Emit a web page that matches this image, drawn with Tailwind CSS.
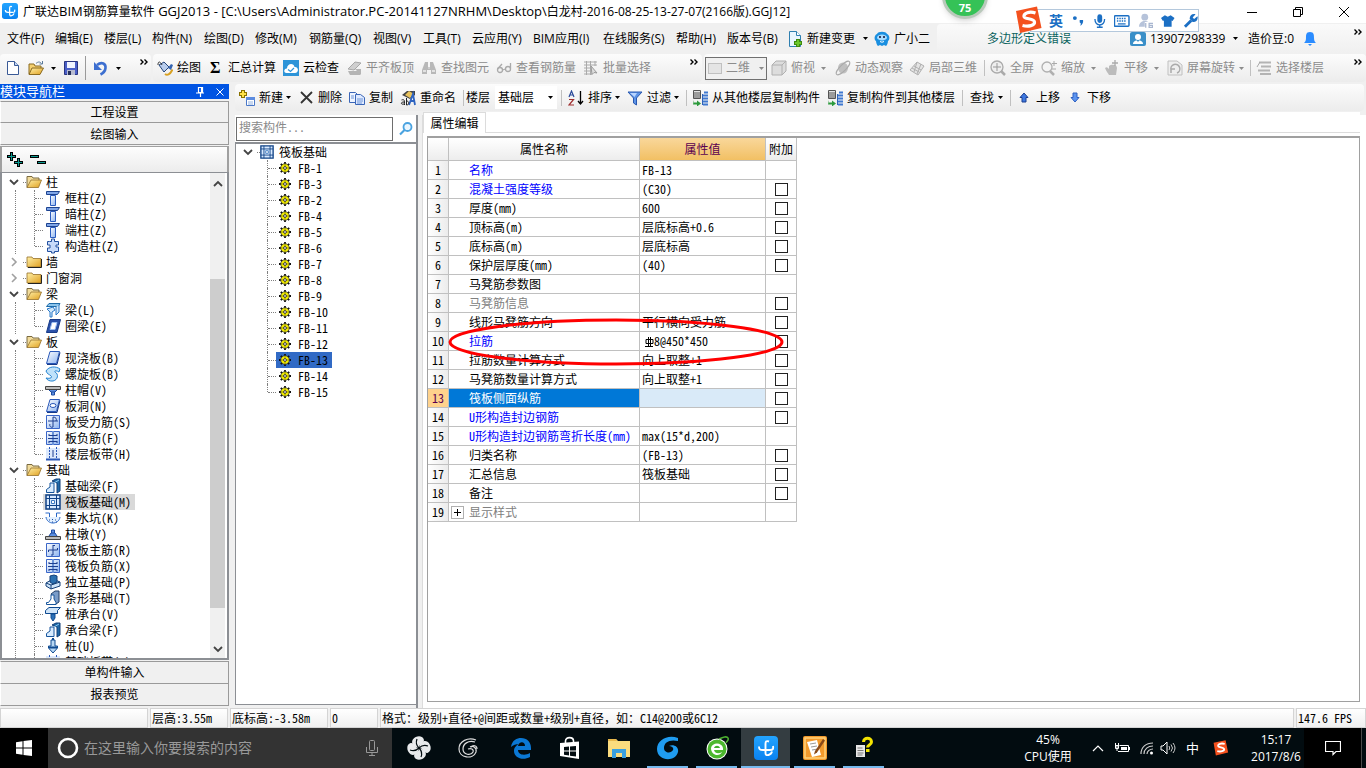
<!DOCTYPE html>
<html lang="zh-CN">
<head>
<meta charset="utf-8">
<title>广联达BIM钢筋算量软件 GGJ2013</title>
<script src="https://cdn.jsdelivr.net/npm/@tailwindcss/browser@4"></script>
</head>
<body class="flex h-screen flex-col overflow-hidden bg-[#f0f0f0] font-['Open_Sans','Noto_Sans_CJK_SC',sans-serif] text-xs text-black">

<svg class="absolute size-0" aria-hidden="true">
  <defs>
    <linearGradient id="gBlue" x1="0" y1="0" x2="1" y2="1"><stop offset="0" stop-color="#fff"/><stop offset="1" stop-color="#8db4f0"/></linearGradient>
    <linearGradient id="gFold" x1="0" y1="0" x2="1" y2="1"><stop offset="0" stop-color="#fff0a8"/><stop offset="1" stop-color="#e0a020"/></linearGradient>
    <linearGradient id="gSky" x1="0" y1="0" x2="0" y2="1"><stop offset="0" stop-color="#23a4ff"/><stop offset="1" stop-color="#0a82f0"/></linearGradient>
  </defs>
  <symbol id="caret" viewBox="0 0 5 3"><path d="M0 0h5L2.500 3z" fill="currentColor"/></symbol>
  <symbol id="more" viewBox="0 0 8 6"><path d="M.5.5 3 3 .5 5.500M4.500.5 7 3 4.500 5.500" fill="none" stroke="currentColor" stroke-width="1.400"/></symbol>
  <symbol id="app" viewBox="0 0 24 24"><rect width="24" height="24" rx="4" fill="url(#gSky)"/><path d="M15 5.500c-3-1-3.500 0-3.500 2.500v9c0 2 1 2.500 3 2 2-.5 3-1.500 3.500-3.500M5 10.500c0 3.500 1.500 3.500 4 3.500h7c3 0 3.500-1 3-4" fill="none" stroke="#fff" stroke-width="1.900"/></symbol>
  <symbol id="page" viewBox="0 0 16 16"><path d="M2.500 1.500h7l4 4v9h-11z" fill="#fff" stroke="#3a5a96"/><path d="M9.500 1.500v4h4" fill="#c4d6f4" stroke="#3a5a96"/></symbol>
  <symbol id="open" viewBox="0 0 16 16"><path d="M1 14V4h5l1 2h6v3" fill="#f4d070" stroke="#8a6a20"/><path d="M1 14.500 4 8h11.500L12 14.500z" fill="url(#gFold)" stroke="#8a6a20"/><path d="M8 3.500c2-2 4-2 5.500 0M14.500 1v3h-3" fill="none" stroke="#5a7a9a"/></symbol>
  <symbol id="save" viewBox="0 0 16 16"><path d="M1.500 1.500h13v13h-13z" fill="#4a5fc8" stroke="#2a3580"/><path d="M4 2h8v6H4z" fill="#f0f4ff"/><path d="M4 10h8v5H4z" fill="#b8bcd0"/><path d="M5 11h3v4H5z" fill="#26305a"/></symbol>
  <symbol id="undo" viewBox="0 0 16 16"><path d="M4 5c5-4 9-1 8.500 3-.3 3-2 5-5 6.500" fill="none" stroke="#3d6fd0" stroke-width="2.600"/><path d="M1 2v8h8z" fill="#3d6fd0"/></symbol>
  <symbol id="draw" viewBox="0 0 16 16"><path d="m2 5 5-3 5 5-5 5z" fill="#b8ccec" stroke="#25457a"/><path d="M5 5c-2-4-4-4-4 0" fill="none" stroke="#333"/><path d="M8 14c2 1.500 5 1 7.500-4.500" fill="none" stroke="#d8a020" stroke-width="2"/><path d="m11 8 3-4 2 1-2 5z" fill="#3664b0"/></symbol>
  <symbol id="cloud" viewBox="0 0 16 16"><rect width="16" height="16" fill="#2d94d8"/><path d="M3.500 13C0 13 1 8 4 8.500 4 3 11 2.500 11.500 7 16 6.500 16 13 12 13z" fill="#fff"/><path d="m5 9.500 2.500 2L11 8" fill="none" stroke="#2d94d8" stroke-width="1.300"/></symbol>
  <symbol id="align" viewBox="0 0 16 16"><path d="m2 9 7-7 6 1-7 7z" fill="#d0d0d0" stroke="#a8a8a8"/><path d="M2 11h12v4H4zM9 9h6v6" fill="#b4b4b4"/></symbol>
  <symbol id="binoc" viewBox="0 0 16 16"><path d="M4 2h3v5h2V2h3l3 8v4h-5v-4H6v4H1v-4z" fill="#b8b8b8"/><path d="M2 11h3M11 11h3M7.500 8h1" stroke="#eee" stroke-width="1.500"/></symbol>
  <symbol id="glass" viewBox="0 0 16 16"><g fill="none" stroke="#aaa" stroke-width="1.300"><circle cx="4" cy="10" r="2.500"/><circle cx="12" cy="9" r="2.500"/><path d="M6.500 10 9.500 9M1.500 9 6 4M14.500 8.500V3"/></g></symbol>
  <symbol id="batch" viewBox="0 0 16 16"><path d="M1 2h13M1 5h13M1 8h8M1 11h8M1 14h8M3.500 1v14M7.500 1v14M12 1v5" stroke="#aaa"/><path d="m8 6 6 7-3-.5-2 2z" fill="#ddd" stroke="#999"/></symbol>
  <symbol id="cube" viewBox="0 0 16 16"><path d="m1 5 4-4h10v10l-4 4H1z" fill="#ddd" stroke="#b0b0b0"/><path d="M1 5h10v10M11 5l4-4" fill="none" stroke="#b0b0b0"/></symbol>
  <symbol id="orbit" viewBox="0 0 16 16"><ellipse cx="8" cy="8" rx="5" ry="5.500" fill="#c0c0c0"/><ellipse cx="8" cy="8" rx="9" ry="3" transform="rotate(-45 8 8)" fill="none" stroke="#aaa"/></symbol>
  <symbol id="local" viewBox="0 0 16 16"><path d="m1 10 7-8 7 4-6 9zM5 6l7 4M3 8l7 4M8 2 5 12M12 4 8 14" fill="#e4e4e4" stroke="#b0b0b0"/></symbol>
  <symbol id="full" viewBox="0 0 16 16"><circle cx="7" cy="7" r="6" fill="#eee" stroke="#aaa" stroke-width="1.300"/><path d="M7 3v8M3 7h8" stroke="#999"/><path d="m11 11 4 4" stroke="#aaa" stroke-width="2.500"/></symbol>
  <symbol id="zoom" viewBox="0 0 16 16"><circle cx="6" cy="7" r="5" fill="#f4f4f4" stroke="#b0b0b0" stroke-width="1.300"/><path d="m9 11 4 4" stroke="#b0b0b0" stroke-width="2.500"/><path d="M13 1v5M11 3.500h5M11 9h4" stroke="#aaa"/></symbol>
  <symbol id="pan" viewBox="0 0 16 16"><path d="M1 8c2-2 3 0 4 1V6c2-2 8-2 8 2l-1 7H5c-1-2-3-4-4-7z" fill="#bcbcbc"/><path d="M11 0v6M8 3h6" stroke="#aaa" stroke-width="1.300"/></symbol>
  <symbol id="rot" viewBox="0 0 16 16"><path d="M1 1h9l5 4v10H1z" fill="#eee" stroke="#c0c0c0"/><path d="M4 10a4.500 4.500 0 1 1 6 3M4 13V9h4" fill="none" stroke="#aaa" stroke-width="1.500"/></symbol>
  <symbol id="floors" viewBox="0 0 16 16"><path d="M3 2.500h12M5 6.500h10M2 10.500h12M4 14h11" stroke="#b4b4b4" stroke-width="1.800"/><path d="M1 7 4 2" stroke="#aaa"/></symbol>
  <symbol id="new" viewBox="0 0 16 16"><path d="M4 0v8M0 4h8" stroke="#8a7200" stroke-width="4"/><path d="M4 1v6M1 4h6" stroke="#ffe24a" stroke-width="2"/><path d="M7.500 7.500h8v8h-8z" fill="#fff" stroke="#4a78c8"/><path d="M7 7h9v3H7z" fill="#5c8ce0"/><path d="M9 12h5M9 14h5" stroke="#90b0e0"/></symbol>
  <symbol id="del" viewBox="0 0 16 16"><path d="m2 2 11 11M13 2 2 13" stroke="#333" stroke-width="1.800"/></symbol>
  <symbol id="copy" viewBox="0 0 16 16"><path d="M.5 2.500h6l3 3v7h-9z" fill="#eef4ff" stroke="#3a66b8"/><path d="M6.500 4.500h5l4 3v7h-9z" fill="#dfeaff" stroke="#3a66b8"/><path d="M2 6h3M2 8h3M8 9h6M8 11h6M8 13h5" stroke="#6c94d8"/></symbol>
  <symbol id="rename" viewBox="0 0 16 16"><path d="m2 5 5-4h8v4l-5 4z" fill="#444"/><path d="m5 5 4-4 5 3-4 4z" fill="#e8c25c"/><path d="M9 15 13 4l2 11M10.500 11h4" fill="none" stroke="#2f64c0" stroke-width="1.800"/><path d="M1.500 10c3-1 3 0 3 5M4 12c-4 0-3 3 0 2M6.500 8v7c3 0 3-4 0-4" fill="none" stroke="#222"/></symbol>
  <symbol id="sort" viewBox="0 0 16 16"><path d="m1 7 2.500-6L6 7M2 5h3" fill="none" stroke="#2a4a9a" stroke-width="1.200"/><path d="M1 9.500h4.500L1 15h5" fill="none" stroke="#a03030" stroke-width="1.200"/><path d="M12.500 1v12M10 11l2.500 3 2.500-3" fill="none" stroke="#000" stroke-width="1.300"/></symbol>
  <symbol id="filter" viewBox="0 0 16 16"><path d="M1 2h14L9.500 8v7L6.500 13V8z" fill="#5c93e6" stroke="#2958b0"/><path d="M3 3h7L7.500 7z" fill="#b8d4ff"/></symbol>
  <symbol id="fcopy" viewBox="0 0 16 16"><path d="M1.500.5h7v8h-7z" fill="#e4e4e4" stroke="#555"/><path d="M2 3h6M2 5h6M2 7h6" stroke="#555"/><path d="M12 2.500h4M11 5.500h5M11 8.500h5M11 11.500h5M11 14.500h5" stroke="#3f78d0" stroke-width="2"/><path d="M10.500 4v11" stroke="#2f62b8"/><path d="M2 10v2.500h3v-2l4 3-4 3v-2H1z" fill="#2c9a3c"/></symbol>
  <symbol id="up" viewBox="0 0 16 16"><path d="m8 3 4 4.500h-2V12H6V7.500H4z" fill="#3d78e0" stroke="#1d3f90"/></symbol>
  <symbol id="down" viewBox="0 0 16 16"><path d="m8 12 4-4.500h-2V3H6v4.500H4z" fill="#5c94f0" stroke="#2d5fc0"/></symbol>
  <symbol id="newpage" viewBox="0 0 16 16"><path d="M2.500.5h7l4 4v11h-11z" fill="#e8f6ff" stroke="#2f7fb0"/><path d="M9.500.5v4h4" fill="#fff" stroke="#2f7fb0"/><path d="M11 8v8M7 12h8" stroke="#3d8a10" stroke-width="4"/><path d="M11 9v6M8 12h6" stroke="#6cc82a" stroke-width="2"/></symbol>
  <symbol id="robot" viewBox="0 0 16 16"><path d="M3 3c1-3 9-3 10 0 3 1 3 6 1 7 0 3-2 5-2 5l-2-1-2 1-2-1-2 1s-2-2-2-5C0 9 0 4 3 3z" fill="#1a8fe0"/><ellipse cx="8" cy="6.500" rx="5" ry="3" fill="#a8dcff"/><circle cx="6" cy="6" r="1" fill="#113"/><circle cx="10" cy="6" r="1" fill="#113"/><path d="M6 10.500q2 1.500 4 0" fill="none" stroke="#fff"/></symbol>
  <symbol id="user" viewBox="0 0 16 16"><rect y="1" width="16" height="14" rx="2" fill="#3a8fc8"/><circle cx="8" cy="6" r="3" fill="#fff"/><path d="M3 13c0-5 10-5 10 0z" fill="#fff"/><path d="m6.500 9 1.500 2 1.500-2z" fill="#3a8fc8"/></symbol>
  <symbol id="bell" viewBox="0 0 16 16"><path d="M8 1c-4 0-4 3-4 6 0 3-1 4-2 5h12c-1-1-2-2-2-5 0-3 0-6-4-6zM6 13h4l-2 2z" fill="#2b8cff"/></symbol>
  <symbol id="mag" viewBox="0 0 14 14"><circle cx="8.500" cy="5" r="4" fill="#eaf6ff" stroke="#4aa3e0" stroke-width="1.800"/><path d="M5.500 8 1 12.500" stroke="#4aa3e0" stroke-width="2.200"/></symbol>
  <symbol id="plus2" viewBox="0 0 16 16"><g stroke="#000" stroke-width="3"><path d="M4.500 0v9M0 4.500h9M11.500 6v9M7 10.500h9"/></g><g stroke="#0a9a90" stroke-width="1"><path d="M4.500 1v7M1 4.500h7M11.500 7v7M8 10.500h7"/></g></symbol>
  <symbol id="minus2" viewBox="0 0 16 16"><path d="M0 4.500h9M7 10.500h9" stroke="#000" stroke-width="3"/><path d="M1 4.500h7M8 10.500h7" stroke="#0a9a90"/></symbol>
  <symbol id="vdown" viewBox="0 0 10 10"><path d="m1 3 4 4 4-4" fill="none" stroke="#444" stroke-width="1.800"/></symbol>
  <symbol id="vright" viewBox="0 0 10 10"><path d="m3 1 4 4-4 4" fill="none" stroke="#a0a0a0" stroke-width="1.600"/></symbol>
  <symbol id="fopen" viewBox="0 0 16 16"><path d="M1 13.500v-11h5l1 1.500h6v3" fill="#f2dc9c" stroke="#7a6a40"/><path d="M1 13.500 5 6h10.500l-3 7.500z" fill="url(#gFold)" stroke="#96702a" stroke-width=".8"/></symbol>
  <symbol id="fclosed" viewBox="0 0 16 16"><path d="M1 13V3h5l1 1.500h8V13z" fill="url(#gFold)" stroke="#96702a" stroke-width=".8"/><path d="M15.500 5v8.500H2" fill="none" stroke="#222"/></symbol>
  <symbol id="col" viewBox="0 0 16 16"><path d="M1.500 1.500h13l-2 3h-11z" fill="#7fa6e8" stroke="#1d4390"/><path d="M5.500 5.500h5v10h-5z" fill="url(#gBlue)" stroke="#2a5cc0"/></symbol>
  <symbol id="gcol" viewBox="0 0 16 16"><path d="M4.500 3.500h2V1h3v2.500h4V7H11v2h2.500v4.500h-4V15h-3v-1.500h-4V10H5V7H2.500V3.500z" fill="#c9dbfa" stroke="#2250a0"/></symbol>
  <symbol id="beam" viewBox="0 0 16 16"><path d="M1.500 4.500 4 1.500h11l-2 3z" fill="#8cc4ec" stroke="#1d6aa8"/><path d="m2 7 6-2 2 3-3 2v5H5v-5zM11 5v8l3-3V3" fill="#cfe7fa" stroke="#2a78c8"/></symbol>
  <symbol id="ring" viewBox="0 0 16 16"><path d="M5 1.500h10.500L12 14.500H1.500z" fill="#2a50a8" stroke="#173a88"/><path d="M7 4.500h5l-2 7H5z" fill="#fff" stroke="#9cc0f4"/></symbol>
  <symbol id="slab" viewBox="0 0 16 16"><path d="M5 1.500h9.500l-3 12H1.500z" fill="url(#gBlue)" stroke="#2a58b8"/><path d="M2 14.500h10l3-12" fill="none" stroke="#173a88"/></symbol>
  <symbol id="spiral" viewBox="0 0 16 16"><path d="M1 5c3-5 10-5 14-2l-1 3c-3-2-5-1-4 0 4 2 3 8-2 9-3 .5-6-1-7-3 4 1 7-.5 5-2-2-2-4-2-5-5z" fill="#bfe2fa" stroke="#2583d0"/></symbol>
  <symbol id="cap" viewBox="0 0 16 16"><path d="M.5 4.500h15v3H.5z" fill="#bbb" stroke="#444"/><path d="m4 8 2 2h4l2-2M6.500 10v3h3v-3" fill="#5c8fe0" stroke="#1d4aa0"/></symbol>
  <symbol id="hole" viewBox="0 0 16 16"><path d="M5 1.500h9.500l-3 12H1.500z" fill="url(#gBlue)" stroke="#2a58b8"/><path d="M2 14.500h10l3-12" fill="none" stroke="#173a88"/><ellipse cx="8" cy="7.500" rx="3" ry="2" fill="#fff" stroke="#2a58b8"/></symbol>
  <symbol id="rebS" viewBox="0 0 16 16"><path d="M1.500 1.500h13v13h-13z" fill="url(#gBlue)" stroke="#3a66c8"/><path d="M8 3v10M3 7h10M8 13c-2 1-4-1-3-3M8 3c3 0 4 2 3 4" fill="none" stroke="#1d3f90"/></symbol>
  <symbol id="rebF" viewBox="0 0 16 16"><path d="M1.500 1.500h13v13h-13z" fill="url(#gBlue)" stroke="#3a66c8"/><path d="M8 1v14" stroke="#6c94d8" stroke-width="2"/><path d="M4 5.500h8M3 8.500h10M4 11.500h8M4 11v2M12 11v2M4 4v2M12 4v2" stroke="#1d3f90"/></symbol>
  <symbol id="band" viewBox="0 0 16 16"><path d="M1 2h14v12H1z" fill="#dce9fc"/><path d="M1 13.500h14" stroke="#2a58b8" stroke-width="2"/><path d="M4.500 1v12M11.500 1v12" stroke="#2a58b8" stroke-dasharray="2 1"/><path d="M8 4v7" stroke="#1d3f90"/></symbol>
  <symbol id="fbeam" viewBox="0 0 16 16"><path d="m7 3 4-2h4v12l-3 2V5z" fill="#1f6aa8" stroke="#123f78"/><path d="M1.500 14.500v-3L5 9V5h4v9.500z" fill="#d8ecff" stroke="#17559c"/><path d="m9 5 5-3" stroke="#8cc8f0"/></symbol>
  <symbol id="raft" viewBox="0 0 16 16"><path d="M1 1h14v14H1z" fill="#d8eaff" stroke="#0f4186" stroke-width="1.500"/><path d="M4.500 1v14M11.500 1v14M1 4.500h14M1 11.500h14" stroke="#0f4186"/><path d="M6.500 6.500h3v3h-3z" fill="#fff" stroke="#3c78c0"/></symbol>
  <symbol id="pit" viewBox="0 0 16 16"><path d="M.5 3h4v5h7V3h4" fill="none" stroke="#2a68c8"/><path d="M1 7c1 8 13 8 14 0" fill="#e2f0ff" stroke="#2a68c8"/><path d="M4 10h1M7 12h1M10 10h1M7 9.500h1M11 12h1" stroke="#1d4aa0"/></symbol>
  <symbol id="pier" viewBox="0 0 16 16"><path d="M.5 10.500h15v3H.5z" fill="#bbb" stroke="#444"/><path d="M4 10 6 7h4l2 3M6.500 7V4h3v3" fill="#5c8fe0" stroke="#1d4aa0"/></symbol>
  <symbol id="rebM" viewBox="0 0 16 16"><path d="M1.500 1.500h13v13h-13z" fill="url(#gBlue)" stroke="#3a66c8"/><path d="M8 3.500h2M8 3v10M6 13h2M3.500 10V8h9V6" fill="none" stroke="#1d3f90"/></symbol>
  <symbol id="indep" viewBox="0 0 16 16"><path d="m1 9 7-4 7 3v4l-9 3-5-3z" fill="#cfe4f8" stroke="#123f78"/><path d="m5 2 4-1 3 1v6L8 10 5 8z" fill="#2a70b0" stroke="#123f78"/><path d="m1 9 5 2 9-3M6 11v4" fill="none" stroke="#123f78"/></symbol>
  <symbol id="strip" viewBox="0 0 16 16"><path d="m6 4 4-3h4v11l-3 2z" fill="#7a9cc8" stroke="#223f68"/><path d="M1.500 14.500v-2h2L6 9V5h3v4l2 3.500v2z" fill="#fff" stroke="#17559c"/></symbol>
  <symbol id="pcap" viewBox="0 0 16 16"><path d="M.5 4.500 4 1.500h11.500l-3 3v3h-12z" fill="#cfe4f8" stroke="#0f4a90"/><path d="M6 8h4v4l-2 3-2-3z" fill="#2a70b8" stroke="#0f4a90"/></symbol>
  <symbol id="pile" viewBox="0 0 16 16"><path d="M6 2h4v6h2.500v2L8 15l-4.500-5V8H6z" fill="#b8d8f4" stroke="#0f4a90"/><path d="M4 9.500h8M7 1h2" stroke="#0f4a90" stroke-width="2"/></symbol>
  <symbol id="gear" viewBox="0 0 12 12"><path d="M6 0v12M0 6h12M1.800 1.800l8.400 8.400M10.200 1.800 1.800 10.200" stroke="#111" stroke-width="1.800"/><circle cx="6" cy="6" r="4.300" fill="#f4ee00" stroke="#333" stroke-width=".8"/><path d="M6 2v8M2 6h8" stroke="#8a8600" stroke-width=".8"/><circle cx="6" cy="6" r="1.400" fill="#fff" stroke="#111" stroke-width=".8"/></symbol>
  <symbol id="sogou" viewBox="0 0 28 28"><path d="m1 5 21-4.500 4.500 21.500L5 27z" fill="#f4511e"/><path d="M20.500 7c-6-2-12 0-11.500 3.500.5 3 10 1.500 10.500 5.500.5 3.500-6 5-12 3.500" fill="none" stroke="#fff" stroke-width="3.200"/></symbol>
</svg>

<!-- title bar -->
<header class="relative flex h-[23px] shrink-0 items-center justify-between bg-white pl-1.5 pr-4">
  <div class="-ml-1 flex items-center gap-[5px] whitespace-nowrap"><svg class="size-4"><use href="#app"/></svg><h1>广联达<span class="text-[13px]">BIM</span>钢筋算量软件<span class="text-[13px]"> GGJ2013 - [C:\Users\Administrator.PC-20141127NRHM\Desktop\</span>白龙村-2016-08-25-13-27-07(2166版).GGJ12]</h1></div>
  <div class="flex items-center gap-[34px]">
    <button aria-label="最小化"><svg class="size-3" viewBox="0 0 12 12"><path d="M1 6.500h10" stroke="#000"/></svg></button>
    <button aria-label="还原"><svg class="size-3" viewBox="0 0 12 12"><path d="M1.500 3.500h7v7h-7zM3.500 3.500v-2h7v7h-2" fill="none" stroke="#000"/></svg></button>
    <button aria-label="关闭"><svg class="size-3" viewBox="0 0 12 12"><path d="m1 1 10 10M11 1 1 11" stroke="#000"/></svg></button>
  </div>
  <!-- floating speed ball -->
  <div class="absolute -top-[27px] left-[942px] flex size-[46px] items-end justify-center rounded-full border-[3px] border-[#b9c9bb] bg-[#35c257] text-[11px] font-bold leading-4 text-white shadow-md">75</div>
  <!-- input method bar -->
  <div class="absolute left-[1030px] top-[9px] z-10 flex h-[23px] w-[169px] items-center gap-2 border border-[#b4c8dc] bg-white pl-[18px] text-[#1b6fc4]">
    <svg class="absolute -left-4 -top-1 size-7"><use href="#sogou"/></svg>
    <button class="text-sm font-bold">英</button>
    <svg class="h-3.5 w-3.5" viewBox="0 0 14 14"><circle cx="4" cy="4" r="2" fill="currentColor"/><path d="M9 6h3.500c.5 3-1 5-3 6 1-2 1-3-.5-3.500z" fill="currentColor"/></svg>
    <svg class="size-3.5" viewBox="0 0 14 14"><rect x="4.500" width="5" height="9" rx="2.500" fill="currentColor"/><path d="M2 5c0 8 10 8 10 0M7 11v2M4 13.500h6" fill="none" stroke="currentColor" stroke-width="1.400"/></svg>
    <svg class="h-3.5 w-4" viewBox="0 0 16 14"><rect x=".5" y="1.500" width="15" height="11" rx="1" fill="none" stroke="currentColor" stroke-width="1.500"/><path d="M3 4.500h10M3 7h10" stroke="currentColor" stroke-width="1.500" stroke-dasharray="1.500 1"/><path d="M4 10h8" stroke="currentColor" stroke-width="1.300"/></svg>
    <svg class="size-4" viewBox="0 0 16 16"><circle cx="7" cy="4" r="3.500" fill="#b6c3da"/><path d="M1 14c0-8 12-8 12 0z" fill="#b6c3da"/><path d="M7 9h9v6H7z" fill="#fff"/><path d="M8 10v5M15.500 10.500h-4v4h3.500v-2h-3" fill="none" stroke="#a8b6d0" stroke-width="1.300"/></svg>
    <svg class="h-3.5 w-3.5" viewBox="0 0 14 14"><path d="m4 1 3 1.500L10 1l4 3-2 3-1-.5V13H3V6.500L2 7 0 4z" fill="currentColor"/></svg>
    <svg class="size-4" viewBox="0 0 16 16"><path d="m2 14 6.500-6.500" stroke="currentColor" stroke-width="3"/><path d="M13 1 10 4.500l1.500 1.500L15 3c1 4-2 6.500-5 6L7 6c-.5-3 2-6 6-5z" fill="currentColor"/></svg>
  </div>
</header>

<!-- menu bar -->
<nav class="flex h-[31px] shrink-0 items-center overflow-hidden whitespace-nowrap">
  <div class="flex items-center pl-[7px] text-left">
    <button class="w-12 text-left">文件(F)</button><button class="w-[49px] text-left">编辑(E)</button><button class="w-12 text-left">楼层(L)</button><button class="w-[52px] text-left">构件(N)</button><button class="w-[51px] text-left">绘图(D)</button><button class="w-[54px] text-left">修改(M)</button><button class="w-16 text-left">钢筋量(Q)</button><button class="w-[50px] text-left">视图(V)</button><button class="w-[49px] text-left">工具(T)</button><button class="w-[61px] text-left">云应用(Y)</button><button class="w-[70px] text-left">BIM应用(I)</button><button class="w-[73px] text-left">在线服务(S)</button><button class="w-[51px] text-left">帮助(H)</button><button class="w-[60px] text-left">版本号(B)</button>
    <button class="flex w-[87px] items-center gap-1"><svg class="size-4"><use href="#newpage"/></svg>新建变更<svg class="ml-1 h-[3px] w-[5px]"><use href="#caret"/></svg></button>
    <button class="flex w-[63px] items-center gap-1"><svg class="size-4"><use href="#robot"/></svg>广小二</button>
  </div>
  <div class="flex h-[29px] flex-1 items-center rounded-l bg-gradient-to-b from-[#fafafa] to-[#f0f0f0] pl-[50px]">
    <a href="#" class="w-[143px] text-[#0c6460]">多边形定义错误</a>
    <button class="flex w-[118px] items-center gap-1"><svg class="size-4"><use href="#user"/></svg>13907298339<svg class="ml-auto mr-2.5 h-[3px] w-[5px]"><use href="#caret"/></svg></button>
    <button class="w-[54px] text-left">造价豆:0</button>
    <button aria-label="通知"><svg class="size-4"><use href="#bell"/></svg></button>
    <button class="mb-3.5 ml-auto mr-1" aria-label="更多"><svg class="h-1.5 w-2"><use href="#more"/></svg></button>
  </div>
</nav>

<!-- main toolbars -->
<div class="flex h-[30px] shrink-0 gap-0.5 whitespace-nowrap pb-0.5">
  <div class="flex w-[151px] shrink-0 items-center rounded bg-gradient-to-b from-[#fcfcfc] to-[#ececec] pl-[5px]">
    <button class="w-[23px]" aria-label="新建"><svg class="size-4"><use href="#page"/></svg></button>
    <button class="flex w-[35px] items-center gap-[7px]" aria-label="打开"><svg class="size-4"><use href="#open"/></svg><svg class="h-[3px] w-[5px]"><use href="#caret"/></svg></button>
    <button class="w-[22px]" aria-label="保存"><svg class="size-4"><use href="#save"/></svg></button>
    <span class="mr-[7px] h-6 w-px bg-[#9a9a9a]"></span>
    <button class="flex w-[47px] items-center gap-[7px]" aria-label="撤销"><svg class="size-4"><use href="#undo"/></svg><svg class="h-[3px] w-[5px]"><use href="#caret"/></svg></button>
    <button class="mb-3" aria-label="更多"><svg class="h-1.5 w-2"><use href="#more"/></svg></button>
  </div>
  <div class="flex w-[549px] shrink-0 items-center rounded bg-gradient-to-b from-[#fcfcfc] to-[#ececec] pl-1">
    <button class="flex w-[53px] items-center gap-1"><svg class="size-4"><use href="#draw"/></svg>绘图</button>
    <button class="flex w-[73px] items-center"><span class="w-[18px] text-left font-['Liberation_Serif',serif] text-base font-bold">Σ</span>汇总计算</button>
    <button class="flex w-[63px] items-center gap-1"><svg class="size-4"><use href="#cloud"/></svg>云检查</button>
    <button class="flex w-[75px] items-center gap-1 text-[#8c8c8c]"><svg class="size-4"><use href="#align"/></svg>平齐板顶</button>
    <button class="flex w-[75px] items-center gap-1 text-[#8c8c8c]"><svg class="size-4"><use href="#binoc"/></svg>查找图元</button>
    <button class="flex w-[87px] items-center gap-1 text-[#8c8c8c]"><svg class="size-4"><use href="#glass"/></svg>查看钢筋量</button>
    <button class="flex items-center gap-1 text-[#8c8c8c]"><svg class="size-4"><use href="#batch"/></svg>批量选择</button>
    <button class="mb-3 ml-auto mr-1" aria-label="更多"><svg class="h-1.5 w-2"><use href="#more"/></svg></button>
  </div>
  <div class="flex flex-1 items-center rounded bg-gradient-to-b from-[#fcfcfc] to-[#ececec] pl-px text-[#8c8c8c]">
    <label class="mr-1 flex h-[23px] w-[62px] items-center gap-1 border border-[#707070] bg-[#f0f0f0] pl-0.5"><span class="h-[11px] w-3.5 border border-[#c0c0c0] bg-[#e4e4e4]"></span><select aria-label="视图模式" class="w-[29px] appearance-none bg-transparent leading-4"><option>二维</option></select><svg class="h-[3px] w-[5px]"><use href="#caret"/></svg></label>
    <button class="flex w-16 items-center gap-1"><svg class="size-4"><use href="#cube"/></svg>俯视<svg class="ml-0.5 h-[3px] w-[5px]"><use href="#caret"/></svg></button>
    <button class="flex w-[74px] items-center gap-1"><svg class="size-4"><use href="#orbit"/></svg>动态观察</button>
    <button class="flex w-[75px] items-center gap-1"><svg class="size-4"><use href="#local"/></svg>局部三维</button>
    <span class="mr-[5px] h-4 w-px bg-[#c0c0c0]"></span>
    <button class="flex w-[51px] items-center gap-1"><svg class="size-4"><use href="#full"/></svg>全屏</button>
    <button class="flex w-[63px] items-center gap-1"><svg class="size-4"><use href="#zoom"/></svg>缩放<svg class="ml-0.5 h-[3px] w-[5px]"><use href="#caret"/></svg></button>
    <button class="flex w-[63px] items-center gap-1"><svg class="size-4"><use href="#pan"/></svg>平移<svg class="ml-0.5 h-[3px] w-[5px]"><use href="#caret"/></svg></button>
    <button class="flex w-[83px] items-center gap-1"><svg class="size-4"><use href="#rot"/></svg>屏幕旋转<svg class="h-[3px] w-[5px]"><use href="#caret"/></svg></button>
    <span class="mr-[5px] h-4 w-px bg-[#c0c0c0]"></span>
    <button class="flex items-center gap-1"><svg class="size-4"><use href="#floors"/></svg>选择楼层</button>
    <button class="mb-3 ml-auto mr-1 text-black" aria-label="更多"><svg class="h-1.5 w-2"><use href="#more"/></svg></button>
  </div>
</div>

<main class="flex min-h-0 flex-1">
  <!-- module navigation -->
  <aside class="mr-1.5 flex w-[229px] shrink-0 flex-col pb-0.5">
    <div class="flex h-[15px] shrink-0 items-center bg-[#0054e3] pr-1 text-white">
      <h2 class="text-[13px] leading-none">模块导航栏</h2>
      <button class="ml-auto mr-[11px]" aria-label="固定"><svg class="h-3 w-2" viewBox="0 0 8 12"><path d="M2.500 1.500h4v5h-4zM0 7h8M4.500 7v4M5.500 2v5" fill="none" stroke="#fff" stroke-width="1.200"/></svg></button>
      <button aria-label="关闭"><svg class="size-2.5" viewBox="0 0 10 10"><path d="m1.500 1.500 7 7m0-7-7 7" stroke="#fff"/></svg></button>
    </div>
    <button class="mt-0.5 h-[22px] shrink-0 border border-[#9a9a9a] border-l-white pt-0.5">工程设置</button>
    <button class="h-[22px] shrink-0 border border-t-0 border-[#9a9a9a] border-l-white pt-0.5">绘图输入</button>
    <div class="mt-px flex h-[26px] shrink-0 items-center gap-[7px] border-x-2 border-t border-[#a0a0a0] bg-gradient-to-b from-[#fdfdfd] to-[#ececec] pl-[5px]">
      <button aria-label="全部展开"><svg class="size-4"><use href="#plus2"/></svg></button>
      <button aria-label="全部折叠"><svg class="size-4"><use href="#minus2"/></svg></button>
    </div>
    <div class="flex min-h-0 flex-1 overflow-hidden border-2 border-t border-[#8c8f94] bg-white pr-0.5 font-['Noto_Sans_Mono_CJK_SC','Noto_Sans_CJK_SC',monospace] leading-4">
      <ul id="nav" class="flex-1 pt-px"></ul>
      <div class="flex w-[15px] flex-col items-center bg-[#f0f0f0] pb-1 pt-1.5" role="scrollbar" aria-controls="nav" aria-valuenow="40">
        <svg class="size-2.5 rotate-180"><use href="#vdown"/></svg>
        <span class="mt-[90px] h-[329px] w-full bg-[#cdcdcd]"></span>
        <svg class="mt-auto size-2.5"><use href="#vdown"/></svg>
      </div>
    </div>
    <button class="mt-px h-[23px] shrink-0 border border-[#9a9a9a] border-l-white">单构件输入</button>
    <button class="h-[22px] shrink-0 border border-t-0 border-[#9a9a9a] border-l-white">报表预览</button>
  </aside>

  <div class="flex min-w-0 flex-1 flex-col">
    <!-- component toolbar -->
    <div class="mr-0.5 flex h-[27px] shrink-0 items-center whitespace-nowrap rounded bg-gradient-to-b from-[#fcfcfc] to-[#ececec] pl-1">
      <button class="flex w-[60px] items-center gap-1"><svg class="size-4"><use href="#new"/></svg>新建<svg class="-ml-px h-[3px] w-[5px]"><use href="#caret"/></svg></button>
      <button class="flex w-[50px] items-center gap-[3px]"><svg class="size-4"><use href="#del"/></svg>删除</button>
      <button class="flex w-[51px] items-center gap-1"><svg class="size-4"><use href="#copy"/></svg>复制</button>
      <button class="flex w-[63px] items-center gap-1"><svg class="size-4"><use href="#rename"/></svg>重命名</button>
      <span class="h-4 w-px bg-[#c0c0c0]"></span>
      <label class="ml-0.5 flex items-center gap-[5px]">楼层<span class="flex h-[23px] w-[62px] items-center bg-white px-[3px]"><select class="w-[50px] appearance-none leading-4"><option>基础层</option></select><svg class="h-[3px] w-[5px]"><use href="#caret"/></svg></span></label>
      <span class="ml-1 mr-1.5 h-4 w-px bg-[#c0c0c0]"></span>
      <button class="flex w-[59px] items-center gap-1"><svg class="size-4"><use href="#sort"/></svg>排序<svg class="-ml-px h-[3px] w-[5px]"><use href="#caret"/></svg></button>
      <button class="flex w-[59px] items-center gap-1"><svg class="size-4"><use href="#filter"/></svg>过滤<svg class="-ml-px h-[3px] w-[5px]"><use href="#caret"/></svg></button>
      <span class="mr-[5px] h-4 w-px bg-[#c0c0c0]"></span>
      <button class="flex w-[135px] items-center gap-1"><svg class="size-4"><use href="#fcopy"/></svg>从其他楼层复制构件</button>
      <button class="flex w-[135px] items-center gap-1"><svg class="size-4"><use href="#fcopy"/></svg>复制构件到其他楼层</button>
      <span class="mr-[7px] h-4 w-px bg-[#c0c0c0]"></span>
      <button class="flex w-10 items-center gap-1">查找<svg class="h-[3px] w-[5px]"><use href="#caret"/></svg></button>
      <span class="mr-[5px] h-4 w-px bg-[#c0c0c0]"></span>
      <button class="flex w-[51px] items-center gap-1"><svg class="size-4"><use href="#up"/></svg>上移</button>
      <button class="flex items-center gap-1"><svg class="size-4"><use href="#down"/></svg>下移</button>
    </div>

    <div class="flex min-h-0 flex-1 pt-1 font-['Noto_Sans_Mono_CJK_SC','Noto_Sans_CJK_SC',monospace]">
      <!-- component list -->
      <section class="mr-1 flex w-[183px] shrink-0 flex-col border-r-2 border-[#8c8f94] pb-[3px]">
        <div class="flex h-[27px] items-center gap-1.5 bg-white pl-px">
          <input type="search" aria-label="搜索构件" placeholder="搜索构件..." class="h-6 w-[157px] border border-[#6e6e6e] px-0.5 pb-1 placeholder:text-[#8a8a8a]">
          <button aria-label="搜索"><svg class="size-3.5"><use href="#mag"/></svg></button>
        </div>
        <ul id="parts" class="flex-1 border-b border-l border-t-2 border-[#8c8f94] bg-white leading-4"></ul>
      </section>

      <!-- property editor -->
      <section class="flex min-w-0 flex-1 flex-col border-l border-[#dcdcdc] bg-white pb-1.5 pr-1.5">
        <div class="-mt-[3px] flex h-[21px] shrink-0 bg-[#f0f0f0]">
          <button class="w-[63px] border border-b-0 border-[#dcdcdc] bg-white">属性编辑</button>
          <span class="flex-1 border-b border-[#dcdcdc] bg-white"></span>
        </div>
        <div class="ml-1 mt-[3px] min-h-0 flex-1 border border-t-2 border-[#a0a0a0]">
          <div class="relative w-[369px]">
            <table class="w-full table-fixed border-separate border-spacing-0 leading-4">
              <colgroup><col class="w-[21px]"><col class="w-[191px]"><col class="w-[126px]"><col class="w-[31px]"></colgroup>
              <thead><tr class="h-[23px] bg-gradient-to-b from-white to-[#ececec] [&>th]:border-b [&>th]:border-r [&>th]:border-[#c0c0c0] [&>th]:p-0 [&>th]:font-normal">
                <th></th><th>属性名称</th><th class="bg-gradient-to-b from-[#f9d79a] to-[#f2c063] text-[#5a0050]">属性值</th><th>附加</th></tr></thead>
              <tbody id="props"></tbody>
            </table>
            <svg class="pointer-events-none absolute left-5 top-[179px] h-[50px] w-[337px]" viewBox="0 0 337 50"><ellipse cx="168" cy="25" rx="166" ry="22" fill="none" stroke="#f00" stroke-width="3"/></svg>
          </div>
        </div>
      </section>
    </div>
  </div>
</main>

<!-- status bar -->
<footer class="flex h-5 shrink-0 gap-0.5 whitespace-nowrap bg-[#f0f0f0] font-['Noto_Sans_Mono_CJK_SC','Noto_Sans_CJK_SC',monospace] leading-[18px] [&>span]:border [&>span]:border-[#d4d4d4] [&>span]:bg-gradient-to-b [&>span]:from-white [&>span]:to-[#f0f0f0] [&>span]:pl-px">
  <span class="w-[148px]"></span><span class="w-[78px]">层高:3.55m</span><span class="w-[98px]">底标高:-3.58m</span><span class="w-12">0</span><span class="flex-1">格式：级别+直径+@间距或数量+级别+直径，如：C14@200或6C12</span><span class="w-[70px]">147.6 FPS</span>
</footer>

<!-- taskbar -->
<div class="flex h-10 shrink-0 bg-[#020c10] text-white">
  <button class="flex w-12 items-center justify-center bg-black" aria-label="开始"><svg class="size-4" viewBox="0 0 16 16"><path d="m0 2.200 6.500-.9v6.200H0zM7.500 1.100 16 0v7.500H7.500zM0 8.500h6.500v6.200L0 13.800zM7.500 8.500H16V16l-8.500-1.100z" fill="#fff"/></svg></button>
  <div class="mr-0.5 flex w-[344px] items-center bg-[#333] pl-[9px] pr-3.5">
    <svg class="size-[22px]" viewBox="0 0 22 22"><circle cx="11" cy="11" r="9" fill="none" stroke="#fff" stroke-width="2.600"/></svg>
    <input aria-label="搜索" placeholder="在这里输入你要搜索的内容" class="ml-[5px] min-w-0 flex-1 bg-transparent text-sm placeholder:text-[#999]">
    <svg class="h-4 w-3" viewBox="0 0 12 16"><rect x="3.500" y=".5" width="5" height="10" rx="1" fill="none" stroke="#999"/><path d="M.5 7v5.500h11V7M6 13v3M3 15.500h6" fill="none" stroke="#999"/></svg>
  </div>
  <div class="flex [&>button]:flex [&>button]:w-[49px] [&>button]:items-center [&>button]:justify-center [&>button]:border-b-2 [&>button]:pt-0.5">
    <button class="border-transparent" aria-label="旋风"><svg class="size-6" viewBox="0 0 24 24"><g fill="#e8eaec"><path id="petal" d="M12 11.500C8 9 8 3 12 1.500c5-1.500 10 2 9 6-.5 2.500-3 2.500-5 2.500s-3 .5-4 1.500z" transform="rotate(-36 12 12)"/><use href="#petal" transform="rotate(90 12 12)"/><use href="#petal" transform="rotate(180 12 12)"/><use href="#petal" transform="rotate(270 12 12)"/></g><path d="M12 12Q8 8 10 3M12 12q4-4 9-2M12 12q4 4 2 9M12 12q-4 4-9 2" fill="none" stroke="#020c10" stroke-width="1.200"/></svg></button>
    <button class="border-transparent" aria-label="浏览器"><svg class="size-6" viewBox="0 0 24 24"><g fill="none" stroke="#ddd" stroke-width="1.200"><path d="M20 4C12 1 3 5 3 13c0 9 14 11 17 3 1-4-3-7-6-5"/><path d="M19 6c-7-2-12 2-12 7 0 6 8 7 10 3 1-3-2-4-5-3M15 11c2-2 6-2 6 2"/></g></svg></button>
    <button class="ml-1 border-transparent" aria-label="Edge"><svg class="size-6" viewBox="0 0 24 24"><path d="M2 11C3 4 8 2 12 2c6 0 10 4 10 10v2H9c0 5 7 6 12 3v4c-7 4-16 1-16-6 0-4 3-6 5-7-3 0-6 1-8 3zm7-1h7c0-5-6-5-7 0z" fill="#0b78d4"/></svg></button>
    <button class="border-transparent" aria-label="应用商店"><svg class="size-6" viewBox="0 0 24 24"><path d="m2 7 19-1.500V23L2 20z" fill="#fff"/><path d="M7.500 7V5c0-4.500 8-4.500 8 0v1.500" fill="none" stroke="#fff" stroke-width="1.600"/><path d="m6 11 5-.5v4H6zM12 10.400l6-.4v4.500h-6zM6 15.500h5v4l-5-.7zM12 15.500h6v5l-6-.8z" fill="#020c10"/></svg></button>
    <button class="border-transparent" aria-label="文件资源管理器"><svg class="size-6" viewBox="0 0 24 24"><path d="M1 3h8l2 2h12v16H1z" fill="#fbdc7e"/><path d="M1 3h8l1 2H1z" fill="#e8b84c"/><path d="M5 13h14v9h-4v-5H9v5H5z" fill="#3aa0e0"/></svg></button>
    <button class="mx-1 !w-[41px] border-[#76b9ed]" aria-label="浏览器"><svg class="size-6" viewBox="0 0 24 24"><path d="M22 2C12-2 1 4 1 13c0 12 18 14 21 3 1-5-4-8-9-6 3 0 5 2 4 4-2 4-9 3-9-2 0-6 6-9 14-7z" fill="#1f9cf0"/></svg></button>
    <button class="mx-1 !w-[41px] border-[#76b9ed]" aria-label="360浏览器"><svg class="size-6" viewBox="0 0 24 24"><circle cx="12" cy="13" r="10.500" fill="#fff"/><circle cx="12" cy="13" r="9.500" fill="#4cb82e"/><path d="M6 12c1-6 11-6 12 0v2H9c1 4 5 4 8 2-2 5-11 4-11-4z" fill="#fff"/><path d="M9 12h6c-1-3-5-3-6 0z" fill="#3fae2a"/><path d="M14 3c4-2 8-3 9-1s-1 3-2 5" fill="none" stroke="#4cb030" stroke-width="1.600"/></svg></button>
    <button class="border-[#76b9ed] bg-[#343d41]" aria-label="广联达"><svg class="size-6"><use href="#app"/></svg></button>
    <button class="mx-1 !w-[41px] border-[#76b9ed]" aria-label="记事"><svg class="size-6" viewBox="0 0 24 24"><rect width="24" height="24" rx="2" fill="#f29a2c"/><rect x="2" y="2" width="20" height="20" fill="none" stroke="#ffd27a" stroke-width="1.500"/><path d="m4 6 10-2 4 15-9 2z" fill="#fff"/><path d="m7 8 6-1M8 11l6-1M9 14l6-1" stroke="#999"/><path d="m12 15 8-12 2 1.500-8 12-3 2z" fill="#8a4a18"/></svg></button>
    <button class="mx-1 !w-[41px] border-[#76b9ed]" aria-label="帮助"><svg class="size-6" viewBox="0 0 24 24"><path d="M4 9h9v12H4z" fill="#e8e8e8"/><path d="M5.500 12h5M5.500 14.500h6M5.500 17h6M5.500 19h5" stroke="#777"/><path d="M11.500 6c0-5 8-5 8 0 0 3-4 3-4 5.500" fill="none" stroke="#f4e400" stroke-width="3"/><path d="M14 13h3.500v3H14z" fill="#f4e400"/></svg></button>
  </div>
  <div class="ml-auto flex items-center text-center leading-[17px]">
    <p class="w-12 whitespace-nowrap">45%<br>CPU使用</p>
    <button class="ml-5" aria-label="显示隐藏的图标"><svg class="h-2 w-3" viewBox="0 0 12 8"><path d="m1 7 5-5 5 5" fill="none" stroke="#fff" stroke-width="1.200"/></svg></button>
    <svg class="ml-2.5 h-3 w-4" viewBox="0 0 16 12"><path d="M5.500 3.500h9v6H4M15.500 5v3M1 3.500h4M3 4v5M1.500 1v2M4.500 1v2M1.500 3.500v3h3v-3" fill="none" stroke="#fff"/><path d="M7 5h6v3H7z" fill="#fff"/></svg>
    <svg class="ml-2.5 size-3.5" viewBox="0 0 14 14"><path d="M1 13C1 6 6 2 13 2M4 13c0-5 4-8 9-8M7 13c0-3 3-5 6-5" fill="none" stroke="#ccc" stroke-width="1.200"/><circle cx="11.500" cy="12" r="1.500" fill="#fff"/></svg>
    <svg class="ml-1.5 h-3.5 w-4" viewBox="0 0 16 14"><path d="M1 5h2l4-4v12L3 9H1z" fill="none" stroke="#fff"/><path d="M9 5q1.500 2 0 4M11 3.500q3 3.500 0 7M13 2q4 5 0 10" fill="none" stroke="#ccc"/></svg>
    <span class="ml-2.5 w-[13px] text-[13px]">中</span>
    <svg class="ml-3.5 size-4"><use href="#sogou"/></svg>
    <p class="ml-[19px] w-14">15:17<br>2017/8/6</p>
    <button class="flex h-10 w-[57px] items-center justify-center bg-black" aria-label="通知中心"><svg class="size-4" viewBox="0 0 16 16"><path d="M.5 1.500h15v10h-4.500l-3 3v-3H.5z" fill="none" stroke="#fff" stroke-width="1.200"/></svg></button>
    <span class="mr-1 h-10 w-px bg-[#4a4a4a]"></span>
  </div>
</div>

<script>
const icon = (id, cls) => `<svg class="${cls}"><use href="#${id}"/></svg>`;

const nav = [
  ['柱', [['col','框柱(Z)'],['col','暗柱(Z)'],['col','端柱(Z)'],['gcol','构造柱(Z)']]],
  ['墙', null],
  ['门窗洞', null],
  ['梁', [['beam','梁(L)'],['ring','圈梁(E)']]],
  ['板', [['slab','现浇板(B)'],['spiral','螺旋板(B)'],['cap','柱帽(V)'],['hole','板洞(N)'],['rebS','板受力筋(S)'],['rebF','板负筋(F)'],['band','楼层板带(H)']]],
  ['基础', [['fbeam','基础梁(F)'],['raft','筏板基础(M)'],['pit','集水坑(K)'],['pier','柱墩(Y)'],['rebM','筏板主筋(R)'],['rebF','筏板负筋(X)'],['indep','独立基础(P)'],['strip','条形基础(T)'],['pcap','桩承台(V)'],['fbeam','承台梁(F)'],['pile','桩(U)'],['band','基础板带(W)']]],
];
document.getElementById('nav').innerHTML = nav.map(([name, kids]) => `
  <li class="whitespace-nowrap">
    <div class="flex h-4 items-center pl-[7px]">
      <button aria-label="展开或折叠${name}" class="flex">${icon(kids ? 'vdown' : 'vright', 'size-2.5')}</button>
      <span class="ml-1 w-[3px] border-t border-dotted border-[#808080]"></span>${icon(kids ? 'fopen' : 'fclosed', 'size-4')}<span class="ml-1">${name}</span>
    </div>
    ${kids ? `<ul class="ml-[13px] border-l border-dotted border-[#808080]">${kids.map(([ic, t], i) => `
      <li class="flex h-4 items-center pl-[18px]">
        <span class="${i === kids.length - 1 && name !== '基础' ? 'h-2 self-start' : 'h-4'} border-l border-dotted border-[#808080]"></span>
        <span class="w-2 border-t border-dotted border-[#808080]"></span>
        <button class="${t === '筏板基础(M)' ? 'bg-[#d9d9d9]' : ''} flex h-4 items-center gap-1 pl-0.5 pr-1">${icon(ic, 'size-4')}${t}</button>
      </li>`).join('')}</ul>` : ''}
  </li>`).join('');

const parts = [1,3,2,4,5,6,7,8,9,10,11,12,13,14,15];
document.getElementById('parts').innerHTML = `
  <li>
    <div class="flex h-4 items-center pl-[7px]"><button aria-label="展开或折叠筏板基础" class="flex">${icon('vdown', 'size-2.5')}</button>
      <span class="ml-1 w-[3px] border-t border-dotted border-[#808080]"></span>${icon('raft', 'size-3.5')}<span class="ml-[5px]">筏板基础</span></div>
    <ul class="ml-[31px]">${parts.map((n, i) => `
      <li class="flex h-4 items-center">
        <span class="${i === parts.length - 1 ? 'h-2 self-start' : 'h-4'} border-l border-dotted border-[#808080]"></span>
        <span class="w-2 border-t border-dotted border-[#808080]"></span>
        <button class="${n === 13 ? 'bg-[#316ac5]' : ''} flex h-4 items-center gap-[7px] pl-[3px] pr-1">${icon('gear', 'size-3')}FB-${n}</button>
      </li>`).join('')}</ul>
  </li>`;

const rebar = '<svg class="mb-0.5 ml-0.5 inline-block size-2.5 align-middle" viewBox="0 0 10 10"><path d="M4.500 0v9M6.500 0v9M2 2.500h7v4H2zM1 9.500h8" fill="none" stroke="#000" stroke-width="1"/></svg>';
const blue = 'text-[#0000ff]', gray = 'text-[#808080]';
const props = [
  ['名称','FB-13',0,blue],['混凝土强度等级','(C30)',1,blue],['厚度(mm)','600',1],['顶标高(m)','层底标高+0.6',1],['底标高(m)','层底标高',1],
  ['保护层厚度(mm)','(40)',1],['马凳筋参数图','',0],['马凳筋信息','',1,gray],['线形马凳筋方向','平行横向受力筋',1],['拉筋',rebar + '8@450*450',1,blue],
  ['拉筋数量计算方式','向上取整+1',1],['马凳筋数量计算方式','向上取整+1',1],['筏板侧面纵筋','',1,'bg-[#0078d7] text-white'],['U形构造封边钢筋','',1,blue],
  ['U形构造封边钢筋弯折长度(mm)','max(15*d,200)',0,blue],['归类名称','(FB-13)',1],['汇总信息','筏板基础',1],['备注','',1],['显示样式','',0,gray],
];
document.getElementById('props').innerHTML = props.map(([name, value, box, cls], i) => {
  const n = i + 1, on = n === 13;
  return `<tr class="h-[19px] whitespace-nowrap [&>*]:border-b [&>*]:border-r [&>*]:border-[#c0c0c0] [&>*]:py-0">
    <th class="${on ? 'bg-[#ffd28c] text-[#5a0050]' : 'bg-gradient-to-r from-white to-[#ececec]'} px-0 text-center font-normal">${n}</th>
    <td class="${cls || ''} pl-0.5 pr-0"><div class="flex items-center"><span class="flex w-[18px]">${n === 19 ? '<button aria-label="展开" class="flex size-[13px] items-center justify-center border border-[#b0b0b0] text-black"><svg class="size-[7px]" viewBox="0 0 7 7"><path d="M0 3.500h7M3.500 0v7" stroke="#000"/></svg></button>' : ''}</span>${name}</div></td>
    <td class="${on ? 'bg-[#d9eaf8]' : ''} pl-0.5 pr-0">${value}</td>
    <td class="px-0">${box ? `<input type="checkbox" aria-label="附加 ${name}" class="mx-auto block size-[13px] appearance-none border border-[#222] bg-white">` : ''}</td>
  </tr>`;
}).join('');
</script>
</body>
</html>
